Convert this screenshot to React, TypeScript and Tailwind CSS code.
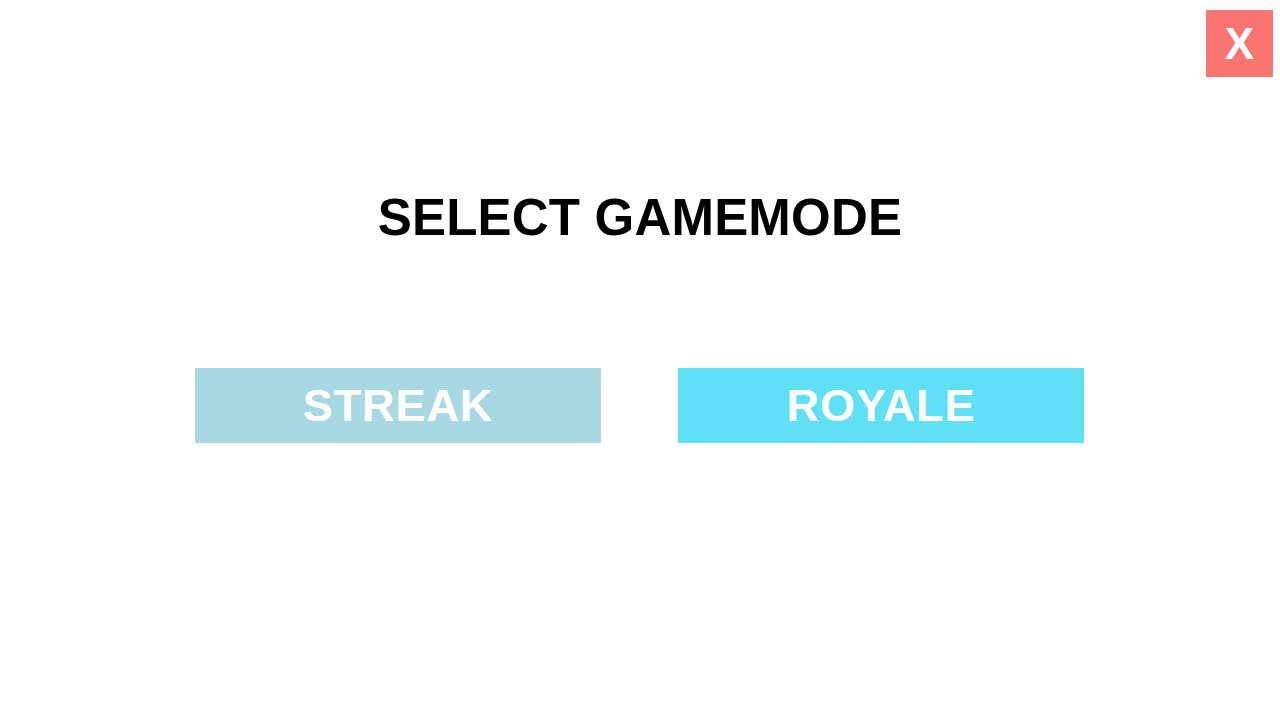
export default function App() {
  return (
    <div
      className="relative min-h-screen w-full bg-white"
      style={{ fontFamily: '"Liberation Sans", Arial, sans-serif' }}
    >
      {/* close button */}
      <button
        type="button"
        className="absolute top-[10px] right-[7px] flex h-[67px] w-[67px] items-center justify-center bg-[#f87571] text-[44px] font-bold leading-none text-white"
      >
        X
      </button>

      <div className="flex flex-col items-center pt-[192px]">
        <h1 className="text-[51px] font-bold leading-none tracking-[0.2px] text-black">
          SELECT GAMEMODE
        </h1>

        <div className="mt-[125px] flex justify-center gap-[77px] pr-px">
          <button
            type="button"
            className="flex h-[75px] w-[406px] items-center justify-center bg-[#a8d9e3] text-[45px] font-bold leading-none tracking-[0.9px] text-white"
          >
            STREAK
          </button>
          <button
            type="button"
            className="flex h-[75px] w-[406px] items-center justify-center bg-[#5fe0f4] text-[45px] font-bold leading-none tracking-[0.9px] text-white"
          >
            ROYALE
          </button>
        </div>
      </div>
    </div>
  );
}
